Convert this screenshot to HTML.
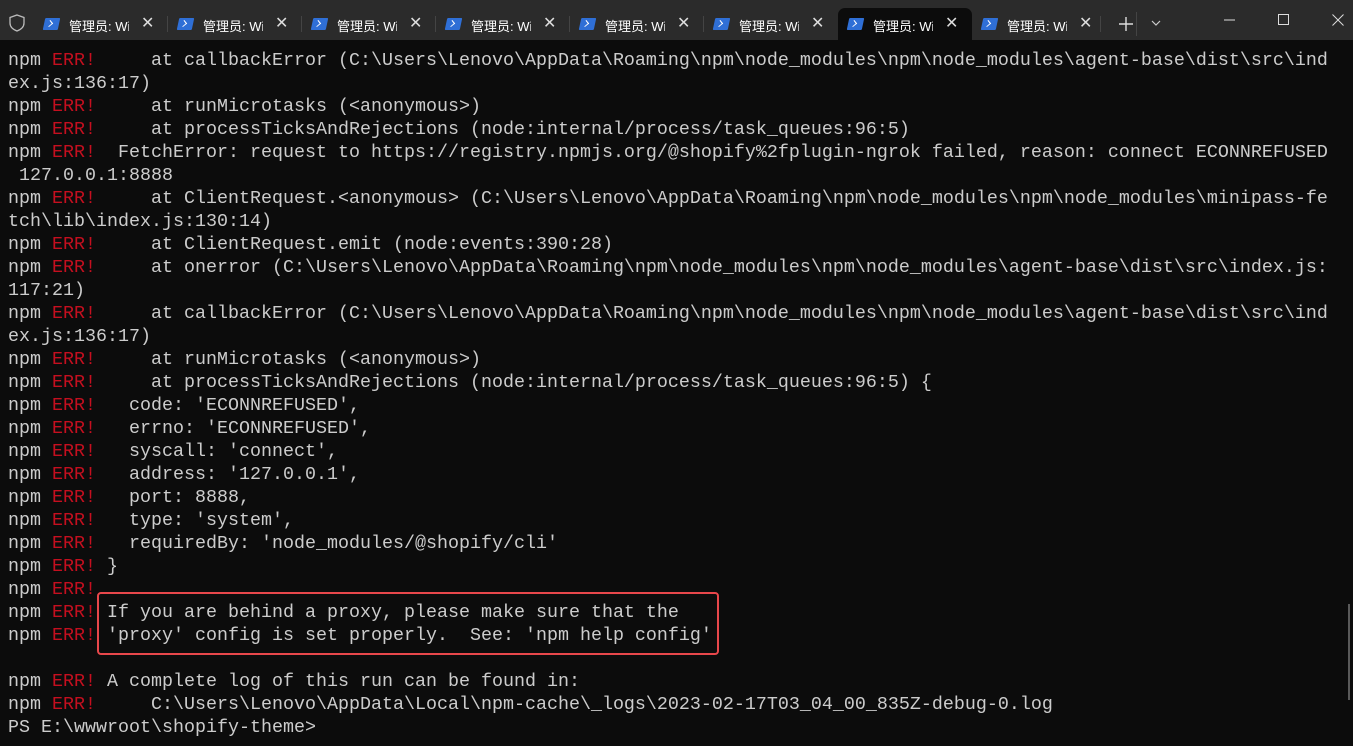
<!DOCTYPE html>
<html><head><meta charset="utf-8"><style>
*{margin:0;padding:0;box-sizing:border-box}
body{width:1353px;height:746px;background:#0c0c0c;overflow:hidden;position:relative;font-family:"Liberation Mono",monospace}
.bar{position:absolute;left:0;top:0;width:1353px;height:40px;background:#2b2b2b}
.tab{position:absolute;top:8px;height:32px;width:134px;font-family:"Liberation Sans","Noto Sans CJK SC",sans-serif;font-size:13px;color:#fff}
.tab.act{background:#0c0c0c;border-radius:7px 7px 0 0}
.tab .ic{position:absolute;left:10px;top:10px;width:15px;height:12px;background:#2f6fd6;transform:skewX(-12deg);border-radius:1px}
.tab .ic:after{content:"";position:absolute;left:3px;top:3px;width:4px;height:4px;border-right:1.5px solid #fff;border-bottom:1.5px solid #fff;transform:rotate(-45deg)}
.tab .t{position:absolute;left:35px;top:8px;width:60px;overflow:hidden;white-space:nowrap}
.tab .x{position:absolute;left:107px;top:5px;font-size:16px;color:#ddd}
.sep{position:absolute;top:16px;width:1px;height:16px;background:#444}
pre{position:absolute;left:8px;top:49px;font-family:"Liberation Mono",monospace;font-size:18.33px;line-height:23px;color:#cccccc;white-space:pre}
.r{color:#c50f1f}
.box{position:absolute;left:97px;top:592px;width:622px;height:63px;border:2.5px solid #e8474b;border-radius:4px}
.sb{position:absolute;left:1348px;top:604px;width:2px;height:96px;background:#5a5a5a}
</style></head><body>
<div class="bar">
<svg style="position:absolute;left:9px;top:14px" width="16" height="18" viewBox="0 0 16 18"><path d="M8 1 L15 3.5 V9 C15 13 12 15.5 8 17 C4 15.5 1 13 1 9 V3.5 Z" fill="none" stroke="#bbb" stroke-width="1.3"/></svg>
<div class="tab" style="left:34px"><div class="ic"></div><div class="t">管理员: Wi</div><div class="x">✕</div></div>
<div class="sep" style="left:167px"></div>
<div class="tab" style="left:168px"><div class="ic"></div><div class="t">管理员: Wi</div><div class="x">✕</div></div>
<div class="sep" style="left:301px"></div>
<div class="tab" style="left:302px"><div class="ic"></div><div class="t">管理员: Wi</div><div class="x">✕</div></div>
<div class="sep" style="left:435px"></div>
<div class="tab" style="left:436px"><div class="ic"></div><div class="t">管理员: Wi</div><div class="x">✕</div></div>
<div class="sep" style="left:569px"></div>
<div class="tab" style="left:570px"><div class="ic"></div><div class="t">管理员: Wi</div><div class="x">✕</div></div>
<div class="sep" style="left:703px"></div>
<div class="tab" style="left:704px"><div class="ic"></div><div class="t">管理员: Wi</div><div class="x">✕</div></div>
<div class="tab act" style="left:838px"><div class="ic"></div><div class="t">管理员: Wi</div><div class="x">✕</div></div>
<div class="tab" style="left:972px"><div class="ic"></div><div class="t">管理员: Wi</div><div class="x">✕</div></div>
<div class="sep" style="left:1100px"></div>
<svg style="position:absolute;left:1119px;top:17px" width="14" height="14"><path d="M7 0V14M0 7H14" stroke="#ddd" stroke-width="1.4"/></svg>
<div class="sep" style="left:1136px;top:12px;height:24px"></div>
<svg style="position:absolute;left:1151px;top:20px" width="10" height="6"><path d="M1 1L5 5L9 1" stroke="#ccc" fill="none" stroke-width="1.2"/></svg>
<svg style="position:absolute;left:1224px;top:19px" width="12" height="2"><path d="M0 1H11" stroke="#ddd"/></svg>
<svg style="position:absolute;left:1278px;top:14px" width="11" height="11"><rect x="0.5" y="0.5" width="10" height="10" fill="none" stroke="#ddd"/></svg>
<svg style="position:absolute;left:1332px;top:14px" width="12" height="12"><path d="M0.5 0.5L11.5 11.5M11.5 0.5L0.5 11.5" stroke="#ddd"/></svg>
</div>
<pre>npm <span class="r">ERR!</span>     at callbackError (C:\Users\Lenovo\AppData\Roaming\npm\node_modules\npm\node_modules\agent-base\dist\src\ind
ex.js:136:17)
npm <span class="r">ERR!</span>     at runMicrotasks (&lt;anonymous&gt;)
npm <span class="r">ERR!</span>     at processTicksAndRejections (node:internal/process/task_queues:96:5)
npm <span class="r">ERR!</span>  FetchError: request to https://registry.npmjs.org/@shopify%2fplugin-ngrok failed, reason: connect ECONNREFUSED
 127.0.0.1:8888
npm <span class="r">ERR!</span>     at ClientRequest.&lt;anonymous&gt; (C:\Users\Lenovo\AppData\Roaming\npm\node_modules\npm\node_modules\minipass-fe
tch\lib\index.js:130:14)
npm <span class="r">ERR!</span>     at ClientRequest.emit (node:events:390:28)
npm <span class="r">ERR!</span>     at onerror (C:\Users\Lenovo\AppData\Roaming\npm\node_modules\npm\node_modules\agent-base\dist\src\index.js:
117:21)
npm <span class="r">ERR!</span>     at callbackError (C:\Users\Lenovo\AppData\Roaming\npm\node_modules\npm\node_modules\agent-base\dist\src\ind
ex.js:136:17)
npm <span class="r">ERR!</span>     at runMicrotasks (&lt;anonymous&gt;)
npm <span class="r">ERR!</span>     at processTicksAndRejections (node:internal/process/task_queues:96:5) {
npm <span class="r">ERR!</span>   code: 'ECONNREFUSED',
npm <span class="r">ERR!</span>   errno: 'ECONNREFUSED',
npm <span class="r">ERR!</span>   syscall: 'connect',
npm <span class="r">ERR!</span>   address: '127.0.0.1',
npm <span class="r">ERR!</span>   port: 8888,
npm <span class="r">ERR!</span>   type: 'system',
npm <span class="r">ERR!</span>   requiredBy: 'node_modules/@shopify/cli'
npm <span class="r">ERR!</span> }
npm <span class="r">ERR!</span>
npm <span class="r">ERR!</span> If you are behind a proxy, please make sure that the
npm <span class="r">ERR!</span> 'proxy' config is set properly.  See: 'npm help config'

npm <span class="r">ERR!</span> A complete log of this run can be found in:
npm <span class="r">ERR!</span>     C:\Users\Lenovo\AppData\Local\npm-cache\_logs\2023-02-17T03_04_00_835Z-debug-0.log
PS E:\wwwroot\shopify-theme&gt;</pre>
<div class="box"></div>
<div class="sb"></div>
</body></html>
